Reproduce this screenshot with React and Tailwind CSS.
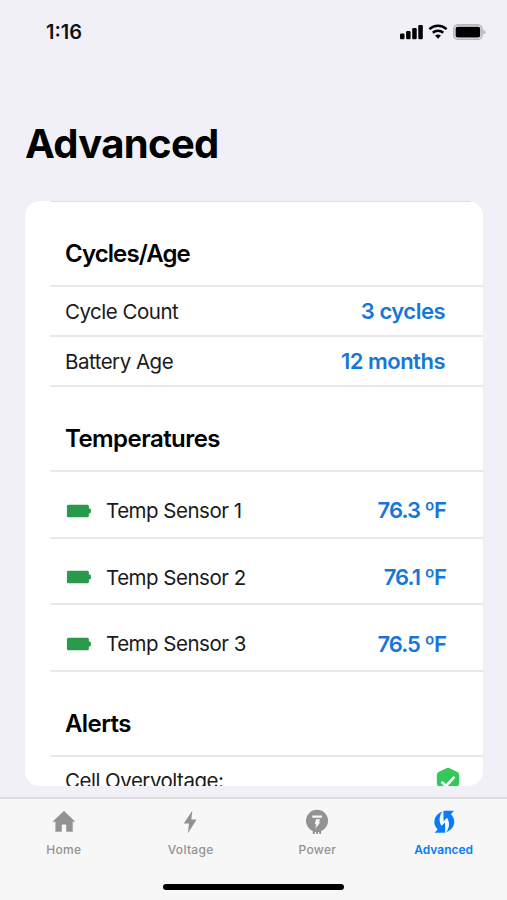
/**
 * Advanced battery screen
 * Lists cycle info, temperature sensors and alerts above the tab bar
 */
const cycles = [
  { label: 'Cycle Count', value: '3 cycles' },
  { label: 'Battery Age', value: '12 months' },
]

const sensors = [
  { label: 'Temp Sensor 1', value: '76.3 ºF' },
  { label: 'Temp Sensor 2', value: '76.1 ºF' },
  { label: 'Temp Sensor 3', value: '76.5 ºF' },
]

const tabs = [
  { label: 'Home', icon: HomeIcon },
  { label: 'Voltage', icon: BoltIcon },
  { label: 'Power', icon: PowerIcon },
  { label: 'Advanced', icon: CycleIcon, active: true },
]

function HomeIcon() {
  return (
    <svg width="24" height="26" viewBox="0 0 24 26" fill="currentColor">
      <path d="M13 2.1 24.3 12.8H21.7V22.8H15.2V15.4H10.8V22.8H4.4V12.8H1.4Z" />
    </svg>
  )
}

function BoltIcon() {
  return (
    <svg width="24" height="26" viewBox="0 0 24 26" fill="currentColor">
      <path d="M14.4 1.5 5.8 14.4H11L9.8 24.4 18.6 10.6H13.3Z" />
    </svg>
  )
}

function PowerIcon() {
  return (
    <svg width="24" height="26" viewBox="0 0 24 26">
      <g fill="currentColor">
        <circle cx="12" cy="11.8" r="11" />
        <path d="M7.8 20H16.1V25H14.6L13.9 23H13V25H11.1V23H10.2L9.3 25H7.8Z" />
      </g>
      <path
        fill="#f7f7f7"
        d="M7.2 6.4H17V8.8H7.2ZM11 10.2H15L14 13.2H15.3L10.4 19.8 11.3 15.2H9.7Z"
      />
    </svg>
  )
}

function CycleIcon() {
  return (
    <svg width="24" height="26" viewBox="0 0 24 26" fill="currentColor">
      <path d="M11.4 1.8H22L18.9 5.2C24.4 10.4 23.4 19.8 14.2 23.2C17.8 18.4 17.8 12.4 14.9 8.8L11.6 12.2Z" />
      <path d="M13.2 23.8H2.6L5.7 20.4C.2 15.2 1.2 5.8 10.4 2.4C6.8 7.2 6.8 13.2 9.7 16.8L13 13.4Z" />
    </svg>
  )
}

function CellularIcon() {
  return (
    <svg width="23" height="16" viewBox="0 0 23 16">
      <rect x="0" y="9.4" width="4.5" height="5.8" rx="1.2" />
      <rect x="6.1" y="7" width="4.5" height="8.2" rx="1.2" />
      <rect x="12.2" y="4" width="4.5" height="11.2" rx="1.2" />
      <rect x="18.3" y="1" width="4.5" height="14.2" rx="1.2" />
    </svg>
  )
}

function WifiIcon() {
  return (
    <svg width="20" height="15" viewBox="0 0 20 15">
      <path
        d="M1.4 5.2C6.2.6 13.8.6 18.6 5.2M4.8 8.8C7.7 6.2 12.3 6.2 15.2 8.8"
        fill="none"
        stroke="#000"
        strokeWidth="2.5"
      />
      <path d="M7 11.5Q10 9.4 13 11.5L10 14.7Z" />
    </svg>
  )
}

function StatusBattery() {
  return (
    <svg width="33" height="16" viewBox="0 0 33 16">
      <rect x=".8" y=".9" width="28.2" height="14.4" rx="4.4" fill="none" stroke="#b5b5b9" strokeWidth="1.6" />
      <rect x="2.6" y="2.8" width="24.6" height="10.8" rx="2" />
      <path d="M30.4 5.8Q32.6 6.5 32.6 8.1T30.4 10.5Z" fill="#b5b5b9" />
    </svg>
  )
}

function SensorBattery() {
  return (
    <svg className="mr-[15px]" width="26" height="14" viewBox="0 0 26 14" fill="#29994c">
      <path d="M3.4 .7H22.4Q23.9 .7 23.9 2.2V4.6H24.6Q25.9 4.6 25.9 5.7V8.3Q25.9 9.4 24.6 9.4H23.9V11.8Q23.9 13.3 22.4 13.3H3.4Q1.9 13.3 1.9 11.8V2.2Q1.9 .7 3.4 .7Z" />
    </svg>
  )
}

function ShieldIcon() {
  return (
    <svg width="24" height="27" viewBox="0 0 24 27">
      <path d="M12 .8Q13 .8 14 1.5L21 4.7Q23.2 5.7 23.2 8V15C23.2 21 18 24 12 26C6 24 .8 21 .8 15V8Q.8 5.7 3 4.7L10 1.5Q11 .8 12 .8Z" fill="#34c759" />
      <path d="M5.5 14.8 10 19 18.4 9.8" fill="none" stroke="#fff" strokeWidth="2.6" />
    </svg>
  )
}

function SectionHeader({ title, className }) {
  return (
    <div className={`flex shrink-0 items-center border-b-2 border-[#e9e9eb] pl-[15px] ${className}`}>
      <h2 className="text-2xl font-semibold">{title}</h2>
    </div>
  )
}

export default function App() {
  return (
    <div className="flex h-[900px] w-[507px] flex-col overflow-hidden bg-[#f1f0f6] font-['Inter',sans-serif] text-black">
      {/* Status bar */}
      <header className="flex h-[63px] shrink-0 items-center justify-between pr-[21px] pl-[46px]">
        <span className="text-[20px] font-semibold text-[#111]">1:16</span>
        <div className="flex items-center gap-[5px]">
          <CellularIcon />
          <WifiIcon />
          <StatusBattery />
        </div>
      </header>

      <h1 className="mt-[57px] ml-[25px] h-[81px] shrink-0 text-[40px] leading-12 font-bold tracking-[-0.65px]">
        Advanced
      </h1>

      <main className="mr-6 ml-[25px] flex h-[585px] shrink-0 flex-col overflow-hidden rounded-[15px] bg-white pl-[25px]">
        <div className="mr-3 -mb-px h-px shrink-0 bg-[#dedee1]" />
        <SectionHeader title="Cycles/Age" className="h-[86px] pt-[22px] tracking-[-0.9px]" />
        {cycles.map((row) => (
          <div
            key={row.label}
            className="flex h-[50px] shrink-0 items-center justify-between border-b-2 border-[#e9e9eb] pt-px pr-[38px] pl-[15px]"
          >
            <span className="pt-px text-[20.5px] tracking-[-0.5px] text-[#1a1a1a]">{row.label}</span>
            <span className="text-[22px] font-semibold tracking-[-0.5px] text-[#1677d9]">{row.value}</span>
          </div>
        ))}

        <SectionHeader title="Temperatures" className="h-[85px] pt-5 tracking-[-0.55px]" />
        {sensors.map((row) => (
          <div
            key={row.label}
            className="flex h-[66.67px] shrink-0 items-center border-b-2 border-[#e9e9eb] pt-[13px] pr-[37px] pl-[15px]"
          >
            <SensorBattery />
            <span className="flex-1 pt-px text-[20.5px] tracking-[-0.5px] text-[#1a1a1a]">{row.label}</span>
            <span className="text-[22px] font-semibold tracking-[-0.95px] text-[#1677d9]">{row.value}</span>
          </div>
        ))}

        <SectionHeader title="Alerts" className="h-[85px] pt-[21px] tracking-[-0.6px]" />
        <div className="flex h-12 shrink-0 items-center justify-between pr-[23px] pl-[15px]">
          <span className="text-[20.5px] tracking-[-0.5px] text-[#1a1a1a]">Cell Overvoltage:</span>
          <ShieldIcon />
        </div>
      </main>

      {/* Tab bar */}
      <footer className="mt-[11px] flex flex-1 flex-col items-center border-t-2 border-[#dddde0] bg-[#f7f7f7]">
        <nav className="grid w-full grid-cols-4 pt-[10px]">
          {tabs.map(({ label, icon: Icon, active }) => (
            <div
              key={label}
              className={`flex flex-col items-center ${active ? 'text-[#087cf8]' : 'text-[#929292]'}`}
            >
              <Icon />
              <span className={`mt-[7px] text-xs leading-4 ${active ? 'font-semibold' : 'pl-px font-medium tracking-[0.3px]'}`}>
                {label}
              </span>
            </div>
          ))}
        </nav>
        <div className="mt-[26px] h-[6px] w-[181px] rounded-full bg-black" />
      </footer>
    </div>
  )
}
